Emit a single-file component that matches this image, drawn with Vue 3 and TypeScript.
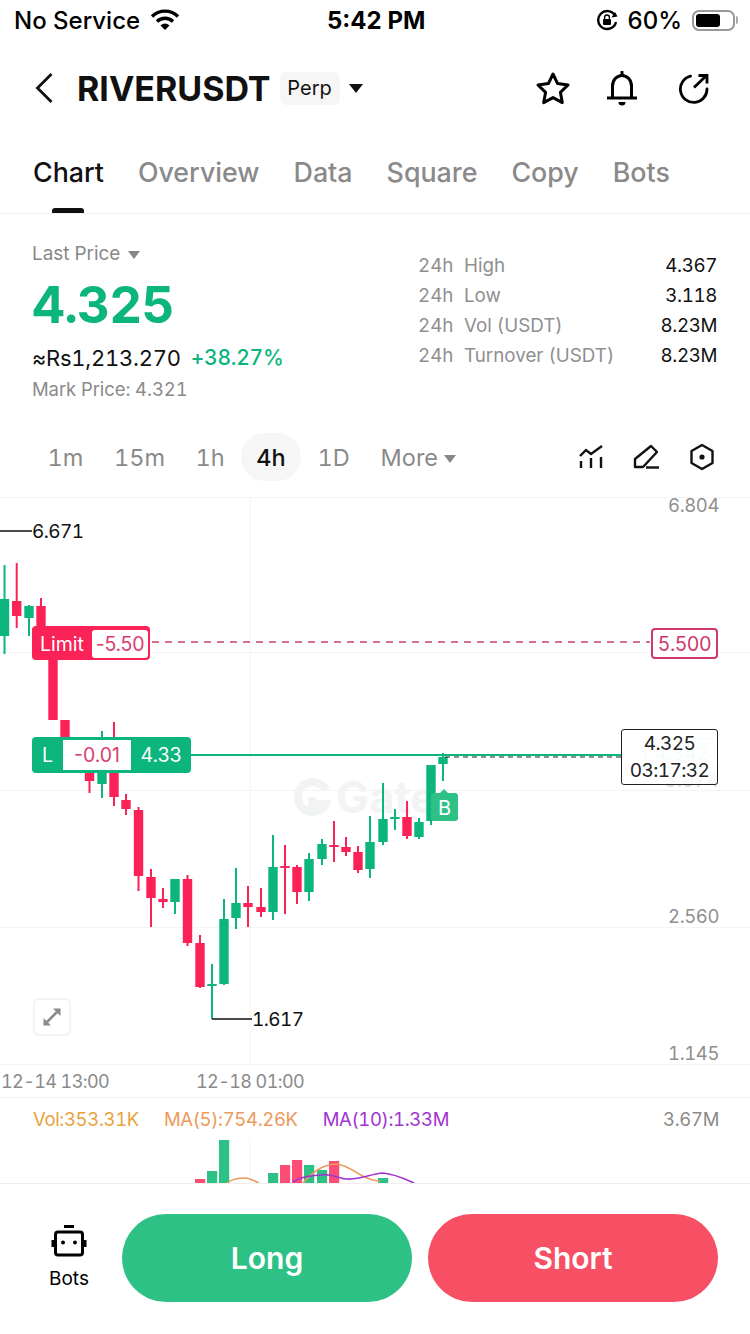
<script setup lang="ts">
type Candle = [number, number, number, number, number, 'g' | 'r']
const candles: Candle[] = [
  [4.5, 565, 654, 599, 636, 'g'], [16.7, 563, 628, 601, 616, 'r'], [29, 605, 636, 606, 618, 'g'],
  [41, 598, 650, 606, 660, 'r'], [53, 640, 720, 640, 720, 'r'], [65, 720, 745, 720, 745, 'r'],
  [89.5, 760, 793, 773, 781, 'r'], [102, 731, 798, 772, 784, 'g'], [114, 722, 806, 772, 797, 'r'],
  [126, 794, 815, 800, 809, 'r'], [138.5, 807, 891, 810, 876, 'r'], [151, 869, 927, 877, 898, 'r'],
  [163, 888, 908, 899, 902, 'r'], [175, 879, 914, 879, 902, 'g'], [187.5, 875, 946, 879, 943, 'r'],
  [200, 935, 988, 943, 987, 'r'], [212, 964, 1019, 984, 986, 'g'], [224, 899, 985, 919, 984, 'g'],
  [236, 868, 929, 903, 918, 'g'], [248, 886, 927, 903, 907, 'r'], [261, 888, 917, 907, 912, 'r'],
  [273, 835, 920, 867, 912, 'g'], [285, 845, 914, 866, 867, 'r'], [297, 865, 904, 867, 892, 'r'],
  [309, 853, 901, 859, 892, 'g'], [322, 839, 865, 844, 859, 'g'], [334, 821, 862, 845, 847, 'r'],
  [346, 837, 856, 847, 852, 'r'], [358, 846, 873, 852, 870, 'r'], [370, 816, 878, 842, 869, 'g'],
  [383, 783, 845, 819, 842, 'g'], [395, 809, 830, 817, 818, 'g'], [407, 801, 839, 817, 836, 'r'],
  [419, 818, 839, 822, 837, 'g'], [431, 765, 825, 765, 821, 'g'], [443, 753, 781, 757, 764, 'g'],
]
const bars: [number, number, 'g' | 'r'][] = [
  [195, 1178, 'r'], [207, 1170, 'g'], [219, 1139, 'g'], [268, 1172, 'g'], [280, 1164, 'r'],
  [292, 1159, 'r'], [304, 1164, 'g'], [317, 1169, 'g'], [329, 1160, 'r'], [378, 1177, 'g'],
]
const tabs = ['Chart', 'Overview', 'Data', 'Square', 'Copy', 'Bots']
const frames = ['1m', '15m', '1h', '4h', '1D']
const stats = [
  ['High', '4.367'], ['Low', '3.118'], ['Vol (USDT)', '8.23M'], ['Turnover (USDT)', '8.23M'],
]
const gridY = [497, 652, 790, 927, 1064]
</script>

<template>
  <div class="page">
    <div class="status">
      <div class="st-left">
        <span>No Service</span>
        <svg class="wifi" width="30" height="23" viewBox="0 0 30 23">
          <path d="M2 8.5A18.5 18.5 0 0 1 28 8.5" fill="none" stroke="#000" stroke-width="3.4" />
          <path d="M7 13.5A11.5 11.5 0 0 1 23 13.5" fill="none" stroke="#000" stroke-width="3.4" />
          <path d="M15 22L10.5 17.4A6.4 6.4 0 0 1 19.5 17.4Z" fill="#000" />
        </svg>
      </div>
      <div class="st-time">5:42 PM</div>
      <div class="st-right">
        <svg width="22" height="22" viewBox="0 0 22 22">
          <path d="M19 6.5A9 9 0 1 0 20 13" fill="none" stroke="#000" stroke-width="2.4" />
          <path d="M21.5 7.5L15.5 8.5L19 3Z" fill="#000" />
          <rect x="7" y="10" width="8" height="6" rx="1" fill="#000" />
          <path d="M8.6 10V8.4A2.4 2.4 0 0 1 13.4 8.4V10" fill="none" stroke="#000" stroke-width="1.3" />
        </svg>
        <span class="pct">60%</span>
        <div class="battery"><div class="level"></div></div>
        <div class="tip"></div>
      </div>
    </div>

    <div class="header">
      <svg class="back" width="18" height="32" viewBox="0 0 18 32">
        <path d="M16.5 2L2.5 16L16.5 30" fill="none" stroke="#111" stroke-width="2.8" />
      </svg>
      <div class="symbol">RIVERUSDT</div>
      <div class="perp">Perp</div>
      <div class="caret big"></div>
      <div class="head-icons">
        <svg width="36" height="34" viewBox="0 0 36 34">
          <path d="M18 3L22.6 12.6L33 14L25.4 21.3L27.3 31.6L18 26.6L8.7 31.6L10.6 21.3L3 14L13.4 12.6Z" fill="none" stroke="#000" stroke-width="3" stroke-linejoin="round" />
        </svg>
        <svg class="bell" width="30" height="35" viewBox="0 0 30 35">
          <path d="M0 27H30" stroke="#000" stroke-width="3" />
          <path d="M5.5 27V15A9.5 10.5 0 0 1 24.5 15V27" fill="none" stroke="#000" stroke-width="3" />
          <path d="M15 1V4" stroke="#000" stroke-width="3" stroke-linecap="round" />
          <path d="M11.5 31H18.5A3.5 3.5 0 0 1 11.5 31Z" fill="#000" />
        </svg>
        <svg width="31" height="31" viewBox="0 0 31 31">
          <path d="M12.5 3.2A13.3 13.3 0 1 0 29 16" fill="none" stroke="#000" stroke-width="2.8" stroke-linecap="round" />
          <path d="M16 14.5L28.5 2.5M20.5 2.5H29V10.5" fill="none" stroke="#000" stroke-width="2.8" />
        </svg>
      </div>
    </div>

    <div class="tabs">
      <div v-for="(t, i) in tabs" :key="t" class="tab" :class="{ active: i === 0 }">
        {{ t }}
        <div v-if="i === 0" class="ind"></div>
      </div>
    </div>

    <div class="price">
      <div class="price-l">
        <div class="last">Last Price <span class="caret gray"></span></div>
        <div class="big-price">4.325</div>
        <div class="conv"><span>≈Rs1,213.270</span><span class="chg">+38.27%</span></div>
        <div class="mark">Mark Price: 4.321</div>
      </div>
      <div class="price-r">
        <div v-for="s in stats" :key="s[0]" class="stat">
          <span class="h24">24h</span><span class="lbl">{{ s[0] }}</span><span class="val">{{ s[1] }}</span>
        </div>
      </div>
    </div>

    <div class="frames">
      <div v-for="f in frames" :key="f" class="frame" :class="{ on: f === '4h' }">{{ f }}</div>
      <div class="frame">More <span class="caret gray"></span></div>
      <div class="tools">
        <svg width="26" height="26" viewBox="577 444 26 26">
          <path d="M579 456L585 450L590 454L601 446" fill="none" stroke="#111" stroke-width="2.4" />
          <path d="M580 461V468M590 458V468M600 457V468" stroke="#111" stroke-width="2.4" />
        </svg>
        <svg width="27" height="26" viewBox="634 443 27 26">
          <path d="M636 466V458L652 445L658 451L644 466Z" fill="none" stroke="#111" stroke-width="2.4" stroke-linejoin="round" />
          <path d="M647 466.5H660" stroke="#111" stroke-width="2.4" />
        </svg>
        <svg width="26" height="28" viewBox="689 443 26 28">
          <path d="M702 445L712.5 451V463L702 469L691.5 463V451Z" fill="none" stroke="#111" stroke-width="2.4" stroke-linejoin="round" />
          <circle cx="702" cy="457" r="2.6" fill="#111" />
        </svg>
      </div>
    </div>

    <div class="chart">
      <div class="mark-logo">
        <svg width="38" height="38" viewBox="0 0 38 38">
          <path d="M33 12A15 15 0 1 0 33 26L19 26V19" fill="none" stroke="#f2f3f5" stroke-width="8" />
        </svg>
        <span>Gate</span>
      </div>
      <svg class="plot" width="750" height="568" viewBox="0 497 750 568">
        <line v-for="y in gridY" :key="y" x1="0" x2="750" :y1="y + 0.5" :y2="y + 0.5" stroke="#f4f4f4" stroke-width="1" />
        <line x1="250" x2="250" y1="497" y2="1065" stroke="#f4f4f4" stroke-width="1" />
        <g v-for="c in candles" :key="c[0]" :fill="c[5] === 'g' ? '#0bb57c' : '#fa2256'">
          <rect :x="c[0] - 1" :y="c[1]" width="2" :height="c[2] - c[1]" />
          <rect :x="c[0] - 4.7" :y="c[3]" width="9.4" :height="Math.max(c[4] - c[3], 2)" />
        </g>
        <path d="M0 531H32M212 1019H252" fill="none" stroke="#111" stroke-width="1.4" />
        <path d="M152 642H650" stroke="#c9406c" stroke-width="1.4" stroke-dasharray="7 6" fill="none" />
        <path d="M191 755H622" stroke="#0bb57c" stroke-width="2" fill="none" />
        <path d="M445 757H622" stroke="#222" stroke-width="1.2" stroke-dasharray="5 4" fill="none" />
      </svg>

      <span class="axis a1">6.804</span>
      <span class="axis a2">2.560</span>
      <span class="axis a3">1.145</span>
      <span class="ext e1">6.671</span>
      <span class="ext e2">1.617</span>

      <div class="limit"><span class="lim-l">Limit</span><span class="lim-v">-5.50</span></div>
      <div class="lim-price">5.500</div>

      <div class="pos"><span class="pos-l">L</span><span class="pos-v">-0.01</span><span class="pos-p">4.33</span></div>

      <div class="ghost"><span>4.342</span></div>
      <span class="ghost-axis">3.974</span>
      <div class="now">
        <span>4.325</span>
        <span>03:17:32</span>
      </div>

      <div class="buy">B</div>

      <div class="expand">
        <svg width="20" height="20" viewBox="0 0 20 20">
          <path d="M11 1.5H18.5V9ZM1.5 11V18.5H9Z" fill="#8a8a8a" />
          <path d="M15 5L5 15" stroke="#8a8a8a" stroke-width="2.6" />
        </svg>
      </div>
    </div>

    <div class="times">
      <span class="t1">12-14 13:00</span>
      <span class="t2">12-18 01:00</span>
    </div>

    <div class="legend">
      <span class="vol">Vol:353.31K</span>
      <span class="ma5">MA(5):754.26K</span>
      <span class="ma10">MA(10):1.33M</span>
      <span class="lg-r">3.67M</span>
    </div>
    <svg class="volplot" width="750" height="44" viewBox="0 1138 750 44">
      <line x1="250" x2="250" y1="1138" y2="1182" stroke="#f4f4f4" />
      <rect v-for="b in bars" :key="b[0]" :x="b[0]" :y="b[1]" width="10.2" :height="1182 - b[1]" :fill="b[2] === 'g' ? '#2ec185' : '#fb4d75'" />
      <path d="M227 1182C232 1178 238 1177 245 1177C250 1177 254 1180 259 1182" fill="none" stroke="#ec9a5b" stroke-width="1.6" />
      <path d="M303 1182C312 1172 322 1163 337 1163C350 1165 358 1174 367 1177C372 1179 378 1180 380 1180" fill="none" stroke="#ec9a5b" stroke-width="1.6" />
      <path d="M293 1181C300 1176 308 1175 320 1174C332 1172 340 1178 347 1178C360 1179 370 1173 383 1172C395 1173 405 1178 414 1182" fill="none" stroke="#a033d0" stroke-width="1.6" />
    </svg>

    <div class="bottom">
      <div class="bots">
        <svg width="36" height="32" viewBox="51 1225 36 32">
          <path d="M64 1226.5H74" stroke="#000" stroke-width="3" />
          <rect x="55.5" y="1232" width="27" height="23" rx="2.5" fill="none" stroke="#000" stroke-width="3" />
          <path d="M53 1240V1247M85 1240V1247" stroke="#000" stroke-width="3" />
          <circle cx="63" cy="1242.5" r="2" fill="#000" />
          <circle cx="75" cy="1242.5" r="2" fill="#000" />
        </svg>
        <span>Bots</span>
      </div>
      <div class="btn long">Long</div>
      <div class="btn short">Short</div>
    </div>
  </div>
</template>

<style>
html, body { margin: 0; background: #fff; }
</style>

<style scoped>
.page { width: 750px; height: 1334px; overflow: hidden; background: #fff; font-family: Inter, "Noto Sans", sans-serif; font-variant-numeric: tabular-nums; color: #111; }
.status { height: 40px; padding-bottom: 12px; display: flex; align-items: center; position: relative; font-size: 24px; font-weight: 500; color: #000; font-variant-numeric: normal; }
.st-left { display: flex; align-items: center; margin-left: 14px; gap: 10px; }
.wifi { margin-top: -2px; }
.st-time { position: absolute; left: 327px; font-weight: 700; }
.st-right { display: flex; align-items: center; margin-left: auto; margin-right: 12px; }
.pct { margin-left: 10px; margin-right: 10px; }
.battery { width: 43px; height: 21px; box-sizing: border-box; border: 2px solid #999; border-radius: 7px; padding: 2px; }
.level { width: 24px; height: 13px; background: #000; border-radius: 3px; }
.tip { width: 2px; height: 8px; background: #aaa; margin-left: 1px; border-radius: 0 2px 2px 0; }
.header { height: 72px; display: flex; align-items: center; }
.back { margin-left: 35px; }
.symbol { margin-left: 24px; font-size: 34px; font-weight: 700; }
.perp { margin-left: 9px; width: 60px; height: 33px; line-height: 33px; background: #f6f6f6; border-radius: 6px; text-align: center; font-size: 20px; }
.caret { display: inline-block; border-left: 6px solid transparent; border-right: 6px solid transparent; border-top: 8px solid #888; vertical-align: middle; }
.caret.big { margin-left: 9px; border-left-width: 7px; border-right-width: 7px; border-top: 9px solid #111; }
.head-icons { margin-left: auto; margin-right: 41px; display: flex; align-items: center; gap: 36px; }
.bell { margin-right: 5px; }
.tabs { height: 90px; box-sizing: border-box; padding: 28px 0 0 33px; display: flex; gap: 34px; border-bottom: 1px solid #f0f0f0; font-size: 26.8px; line-height: 40px; color: #8a8a8a; font-weight: 500; }
.tab { position: relative; height: 61px; }
.tab.active { color: #111; }
.ind { position: absolute; left: 19px; bottom: 0; width: 32px; height: 5px; background: #111; border-radius: 3px 3px 0 0; }
.price { height: 219px; box-sizing: border-box; display: flex; padding: 26px 33px 0 32px; justify-content: space-between; }
.last { font-size: 18.9px; line-height: 28px; color: #888; }
.last .caret { margin-left: 3px; }
.big-price { margin-top: 9px; font-size: 51px; line-height: 56px; font-weight: 700; letter-spacing: -0.8px; color: #0bb57c; }
.conv { margin-top: 10px; font-size: 22px; line-height: 30px; display: flex; gap: 10px; letter-spacing: -0.25px; }
.chg { color: #0bb57c; font-weight: 500; font-size: 21px; }
.mark { margin-top: 3px; font-size: 18.5px; line-height: 26px; color: #8a8a8a; letter-spacing: -0.1px; }
.price-r { padding-top: 10px; width: 299px; }
.stat { display: flex; height: 30px; align-items: center; font-size: 18.8px; color: #8f8f8f; }
.h24 { width: 46px; }
.val { margin-left: auto; color: #111; letter-spacing: -0.4px; }
.frames { height: 64px; padding: 0 0 0 33px; display: flex; align-items: flex-start; gap: 2px; }
.frame { height: 48px; line-height: 50px; text-align: center; border-radius: 24px; font-size: 23.5px; color: #8a8a8a; white-space: nowrap; }
.frame:nth-child(1) { width: 65px; }
.frame:nth-child(2) { width: 79px; }
.frame:nth-child(3) { width: 58px; }
.frame:nth-child(4) { width: 60px; }
.frame:nth-child(5) { width: 61px; }
.frame:nth-child(6) { width: 103px; margin-left: 1px; }
.frame.on { background: #f6f6f6; color: #111; font-weight: 500; }
.frame .caret { margin-left: 0; margin-top: -2px; }
.tools { margin-left: auto; margin-right: 35px; height: 48px; display: flex; align-items: center; gap: 29px; }
.chart { position: relative; height: 568px; }
.plot { position: absolute; left: 0; top: 0; }
.mark-logo { position: absolute; left: 293px; top: 281px; display: flex; align-items: center; gap: 5px; font-size: 44px; line-height: 38px; font-weight: 700; color: #f2f3f5; }
.axis { position: absolute; right: 31px; font-size: 18.5px; line-height: 16px; color: #8f8f8f; letter-spacing: -0.4px; }
.a1 { top: 0; }
.a2 { top: 411px; }
.a3 { top: 548px; }
.ext { position: absolute; font-size: 19px; line-height: 24px; color: #111; letter-spacing: -0.6px; }
.e1 { left: 32px; top: 23px; }
.e2 { left: 252px; top: 511px; }
.limit { position: absolute; left: 32px; top: 129px; width: 118px; height: 34px; box-sizing: border-box; background: #fa2256; border-radius: 4px; display: flex; align-items: center; padding: 3px 2px 2px 0; font-size: 19.5px; font-variant-numeric: normal; }
.lim-l { width: 60px; text-align: center; color: #fff; }
.lim-v { flex: 1; height: 28px; line-height: 28px; background: #fff; border-radius: 3px; text-align: center; color: #d8406e; letter-spacing: -0.3px; }
.lim-price { position: absolute; left: 651px; top: 131px; width: 67px; height: 31px; box-sizing: border-box; background: #fff; border: 2px solid #d0386b; border-radius: 4px; text-align: center; line-height: 28px; font-size: 19.5px; color: #d0386b; letter-spacing: -0.5px; }
.pos { position: absolute; left: 32px; top: 240px; width: 159px; height: 36px; box-sizing: border-box; background: #0bb57c; border-radius: 4px; display: flex; align-items: center; padding: 3px 0; font-size: 19.5px; color: #fff; font-variant-numeric: normal; }
.pos-l { width: 31px; text-align: center; }
.pos-v { width: 68px; height: 30px; line-height: 30px; background: #fff; text-align: center; color: #d8406e; }
.pos-p { flex: 1; text-align: center; }
.ghost { position: absolute; left: 645px; top: 241px; width: 73px; height: 30px; box-sizing: border-box; border: 1px solid #cfeee2; color: #cfeee2; font-size: 19px; line-height: 30px; text-align: center; }
.ghost-axis { position: absolute; right: 31px; top: 272px; font-size: 19px; line-height: 24px; color: #d8d8d8; }
.now { position: absolute; left: 621px; top: 232px; width: 97px; height: 56px; box-sizing: border-box; border: 1px solid #222; border-radius: 3px; background: rgba(255, 255, 255, 0.78); display: flex; flex-direction: column; align-items: center; justify-content: center; font-size: 19px; line-height: 27px; color: #222; letter-spacing: -0.6px; }
.buy { position: absolute; left: 431px; top: 296px; width: 27px; height: 28px; background: #2ec185; border-radius: 3px; text-align: center; line-height: 30px; font-size: 20px; color: #fff; }
.buy::before { content: ""; position: absolute; left: 9px; top: -4px; border-left: 4px solid transparent; border-right: 4px solid transparent; border-bottom: 4px solid #2ec185; }
.expand { position: absolute; left: 33px; top: 501px; width: 38px; height: 38px; box-sizing: border-box; border: 2px solid #f3f3f3; border-radius: 6px; display: flex; align-items: center; justify-content: center; background: #fff; }
.times { height: 32px; border-bottom: 1px solid #f2f2f2; position: relative; font-size: 18px; line-height: 33px; color: #8a8a8a; letter-spacing: -0.6px; }
.t1 { position: absolute; left: 1px; }
.t2 { position: absolute; left: 196px; }
.legend { height: 41px; display: flex; align-items: center; padding: 0 31px 0 33px; font-size: 18.5px; gap: 25px; letter-spacing: -0.35px; }
.vol { color: #e8a33d; }
.ma5 { color: #ec9a5b; }
.ma10 { color: #a033d0; }
.lg-r { margin-left: auto; color: #8a8a8a; }
.volplot { display: block; }
.bottom { height: 152px; box-sizing: border-box; border-top: 1px solid #eeeeee; padding: 30px 32px 0 0; display: flex; align-items: flex-start; }
.bots { width: 122px; box-sizing: border-box; padding: 11px 0 0 16px; display: flex; flex-direction: column; align-items: center; gap: 10px; font-size: 19px; color: #000; }
.btn { width: 290px; height: 88px; border-radius: 44px; display: flex; align-items: center; justify-content: center; font-size: 30px; font-weight: 600; color: #fff; }
.long { background: #2ec185; }
.short { background: #f74f63; margin-left: 16px; }
</style>
